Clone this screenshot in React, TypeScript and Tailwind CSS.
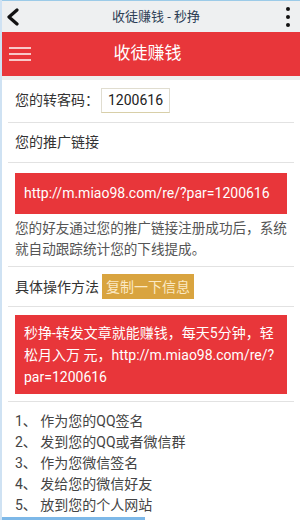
import React from 'react';

const font = { fontFamily: 'Roboto, "Noto Sans CJK SC", sans-serif' };

export default function App() {
  return (
    <div className="w-[300px] h-[520px] overflow-hidden bg-white relative border-l-2 border-[#cfe2f3]" style={font}>
      {/* system title bar */}
      <div className="h-[32px] bg-[#eef0f1] border-t border-[#9ccbe8] flex items-center justify-between pl-[4px] pr-[10px]">
        <svg width="14" height="18" viewBox="0 0 14 18">
          <path d="M11 2 L3 9 L11 16" fill="none" stroke="#111" strokeWidth="3.2" strokeLinecap="round" strokeLinejoin="round" />
        </svg>
        <span className="text-[13px] text-[#2d3e55] ml-[6px]">收徒赚钱 - 秒挣</span>
        <div className="flex flex-col gap-[4px]">
          <span className="w-[4px] h-[4px] rounded-full bg-[#111]"></span>
          <span className="w-[4px] h-[4px] rounded-full bg-[#111]"></span>
          <span className="w-[4px] h-[4px] rounded-full bg-[#111]"></span>
        </div>
      </div>

      {/* red header */}
      <div className="h-[44px] bg-[#e8363a] flex items-center relative">
        <div className="flex flex-col gap-[4px] ml-[7px]">
          <span className="w-[22px] h-[2px] bg-[#f8c9c9]"></span>
          <span className="w-[22px] h-[2px] bg-[#f8c9c9]"></span>
          <span className="w-[22px] h-[2px] bg-[#f8c9c9]"></span>
        </div>
        <span className="flex-1 text-center text-[17px] text-white pr-[36px]">收徒赚钱</span>
      </div>
      <div className="h-[4px] bg-[#eeeeee]"></div>

      <div className="px-[6px]">
        <div className="flex items-center pl-[7px] pt-[8px] pb-[9px] border-b border-[#e2e2e2]">
          <span className="text-[14px] text-[#333]">您的转客码：</span>
          <span className="ml-[2px] px-[6px] h-[25px] flex items-center border border-[#e0ddd0] border-b-[#d8cfa8] text-[14px] text-[#222]">1200616</span>
        </div>

        <div className="pl-[7px] py-[11px] text-[14px] text-[#333] border-b border-[#e2e2e2] leading-[17px]">您的推广链接</div>

        <div className="px-[7px] pt-[10px]">
          <div className="bg-[#e8363a] text-white text-[14px] h-[41px] flex items-center pl-[9px]">http://m.miao98.com/re/?par=1200616</div>
          <p className="text-[13.6px] leading-[21px] text-[#555] mt-[4px] pb-[6px]">
            您的好友通过您的推广链接注册成功后，系统就自动跟踪统计您的下线提成。
          </p>
        </div>

        <div className="border-t border-b border-[#e2e2e2] flex items-center pl-[7px] py-[7px]">
          <span className="text-[14px] leading-[20px] text-[#333]">具体操作方法</span>
          <span className="ml-[3px] bg-[#d9a43f] text-[#fbe9c4] text-[14px] leading-[20px] px-[4px] h-[25px] flex items-center">复制一下信息</span>
        </div>

        <div className="px-[7px] pt-[8px] pb-[7px] border-b border-[#e2e2e2]">
          <div className="bg-[#e8363a] text-white text-[14px] leading-[22px] px-[9px] pt-[7px] pb-[6px]">
            <span className="block whitespace-nowrap">秒挣-转发文章就能赚钱，每天5分钟，轻</span>
            <span className="block whitespace-nowrap">松月入万 元，http://m.miao98.com/re/?</span>
            <span className="block whitespace-nowrap">par=1200616</span>
          </div>
        </div>

        <div className="pl-[7px] pt-[9px] text-[14px] leading-[21px] text-[#444]">
          <div>1、 作为您的QQ签名</div>
          <div>2、 发到您的QQ或者微信群</div>
          <div>3、 作为您微信签名</div>
          <div>4、 发给您的微信好友</div>
          <div>5、 放到您的个人网站</div>
        </div>
      </div>

      <div className="absolute left-0 bottom-0 w-[143px] h-[3px] bg-[#7db8e8]"></div>
    </div>
  );
}
